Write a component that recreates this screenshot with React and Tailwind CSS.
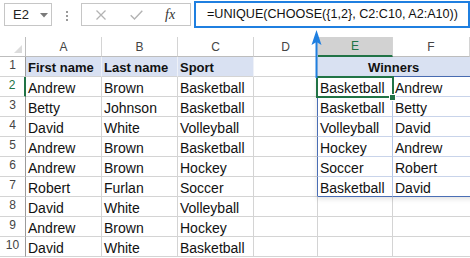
import React from "react";

const data = [
  ["Andrew", "Brown", "Basketball", "Basketball", "Andrew"],
  ["Betty", "Johnson", "Basketball", "Basketball", "Betty"],
  ["David", "White", "Volleyball", "Volleyball", "David"],
  ["Andrew", "Brown", "Basketball", "Hockey", "Andrew"],
  ["Andrew", "Brown", "Hockey", "Soccer", "Robert"],
  ["Robert", "Furlan", "Soccer", "Basketball", "David"],
  ["David", "White", "Volleyball", "", ""],
  ["Andrew", "Brown", "Hockey", "", ""],
  ["David", "White", "Basketball", "", ""],
];

function ColHead({ label, selected }) {
  return (
    <div
      className={
        "h-[20px] flex items-center justify-center text-[12px] border-r border-[#d4d4d4] " +
        (selected
          ? "bg-[#d2d2d2] text-[#217346] border-b-2 border-b-[#217346]"
          : "bg-white text-[#444] border-b border-b-[#bdbdbd]")
      }
    >
      {label}
    </div>
  );
}

export default function App() {
  return (
    <div
      className="relative w-[470px] h-[258px] overflow-hidden bg-white text-[#111]"
      style={{ fontFamily: '"Liberation Sans", Arial, sans-serif' }}
    >
      {/* Formula bar */}
      <div className="flex items-start h-[29px]">
        <div className="ml-[4px] mt-[3px] w-[48px] h-[23px] border border-[#c6c6c6] flex items-center pl-[8px] text-[13px] text-[#222]">
          <span>E2</span>
          <svg width="8" height="5" viewBox="0 0 8 5" className="ml-[11px] mt-[1px]">
            <path d="M0 0 L8 0 L4 4.5 Z" fill="#7a7a7a" />
          </svg>
        </div>
        <div className="w-[29px] h-[29px] flex flex-col items-center pt-[11px] gap-[2px]">
          <span className="w-[2px] h-[2px] bg-[#9a9a9a]" />
          <span className="w-[2px] h-[2px] bg-[#9a9a9a]" />
          <span className="w-[2px] h-[2px] bg-[#9a9a9a]" />
        </div>
        <div className="mt-[3px] w-[110px] h-[23px] border border-[#c6c6c6] flex items-center">
          <svg width="10" height="10" viewBox="0 0 10 10" className="ml-[14px]">
            <path d="M0.5 0.5 L9.5 9.5 M9.5 0.5 L0.5 9.5" stroke="#b3b3b3" strokeWidth="1.3" />
          </svg>
          <svg width="13" height="10" viewBox="0 0 13 10" className="ml-[24px]">
            <path d="M0.7 5.2 L4.5 9 L12.3 0.8" stroke="#b3b3b3" strokeWidth="1.4" fill="none" />
          </svg>
          <span
            className="ml-[22px] text-[14px] italic text-[#333] leading-none"
            style={{ fontFamily: '"Liberation Serif", serif' }}
          >
            fx
          </span>
        </div>
        <div className="ml-[3px] mt-[1px] flex-1 h-[27px] border-2 border-[#1f7fe0] flex items-center pl-[11px] text-[12.6px] text-[#111] whitespace-nowrap">
          =UNIQUE(CHOOSE({"{"}1,2{"}"}, C2:C10, A2:A10))
        </div>
      </div>

      {/* Grid */}
      <div className="mt-[8px] grid grid-cols-[26px_76px_76px_76px_64px_75px_1fr]">
        {/* column headers */}
        <div className="h-[20px] border-r border-[#bdbdbd] border-b border-b-[#bdbdbd] flex items-end justify-end pr-[3px] pb-[3px]">
          <svg width="8" height="8" viewBox="0 0 8 8">
            <path d="M8 0 L8 8 L0 8 Z" fill="#dcdcdc" />
          </svg>
        </div>
        <ColHead label="A" />
        <ColHead label="B" />
        <ColHead label="C" />
        <ColHead label="D" />
        <ColHead label="E" selected />
        <ColHead label="F" />

        {/* row 1 */}
        <div className="h-[20px] border-r border-[#9b9b9b] border-b border-b-[#d4d4d4] flex items-end justify-center pb-[2px] text-[12px] text-[#444]">
          1
        </div>
        {["First name", "Last name", "Sport"].map((t) => (
          <div
            key={t}
            className="h-[20px] bg-[#d9e1f2] border-r border-[#eef1f8] border-b border-b-[#d4d4d4] flex items-end pl-[2px] text-[13px] font-bold leading-[16px] whitespace-nowrap"
          >
            {t}
          </div>
        ))}
        <div className="h-[20px] border-r border-[#d4d4d4] border-b border-b-[#d4d4d4]" />
        <div className="col-span-2 h-[20px] bg-[#d9e1f2] border-b border-b-[#4a6eb5] flex items-end justify-start pl-[50px] text-[13px] font-bold leading-[16px]">
          Winners
        </div>

        {data.map((r, i) => {
          const rowNum = i + 2;
          const inTable = i < 6;
          const lastTable = i === 5;
          const sel = rowNum === 2;
          return (
            <React.Fragment key={i}>
              <div
                className={
                  "h-[20px] flex items-end justify-center pb-[2px] text-[12px] border-b border-b-[#d4d4d4] " +
                  (sel
                    ? "border-r-2 border-r-[#217346] text-[#217346]"
                    : "border-r border-r-[#9b9b9b] text-[#444]")
                }
              >
                {rowNum}
              </div>
              {r.slice(0, 3).map((t, j) => (
                <div
                  key={j}
                  className="h-[20px] border-r border-[#d4d4d4] border-b border-b-[#d4d4d4] flex items-end pl-[2px] text-[14px] leading-[16px] whitespace-nowrap overflow-hidden"
                >
                  {t}
                </div>
              ))}
              <div
                className={
                  "h-[20px] border-b border-b-[#d4d4d4] " +
                  (inTable ? "border-r border-r-[#4a6eb5]" : "border-r border-r-[#d4d4d4]")
                }
              />
              <div
                className={
                  "h-[20px] flex items-end pl-[2px] text-[14px] leading-[16px] whitespace-nowrap " +
                  (inTable
                    ? "border-r border-r-[#b4c6e7] " +
                      (lastTable ? "border-b border-b-[#4a6eb5]" : "border-b border-b-[#c9d4ea]")
                    : "border-r border-r-[#d4d4d4] border-b border-b-[#d4d4d4]")
                }
              >
                {r[3]}
              </div>
              <div
                className={
                  "h-[20px] flex items-end pl-[2px] text-[14px] leading-[16px] whitespace-nowrap " +
                  (inTable
                    ? lastTable
                      ? "border-b border-b-[#4a6eb5]"
                      : "border-b border-b-[#c9d4ea]"
                    : "border-b border-b-[#d4d4d4]")
                }
              >
                {r[4]}
              </div>
            </React.Fragment>
          );
        })}
      </div>

      {/* soft shadow around the result range */}
      <div className="pointer-events-none absolute left-[317px] top-[77px] w-[160px] h-[120px] shadow-[0_2px_5px_rgba(0,0,0,0.12)]" />

      {/* selection box on E2 */}
      <div className="absolute left-[316px] top-[76px] w-[78px] h-[22px] border-2 border-[#217346]" />
      <div className="absolute left-[389px] top-[94px] w-[7px] h-[7px] bg-[#217346] border border-white" />

      {/* blue arrow */}
      <svg
        className="absolute left-[308px] top-[27px]"
        width="18"
        height="52"
        viewBox="0 0 18 52"
      >
        <path d="M8.5 14 L8.5 51" stroke="#1f7fe0" strokeWidth="2" />
        <path d="M8.5 3 L3.5 18 L8.5 15 L13.5 18 Z" fill="#1f7fe0" />
      </svg>
    </div>
  );
}
